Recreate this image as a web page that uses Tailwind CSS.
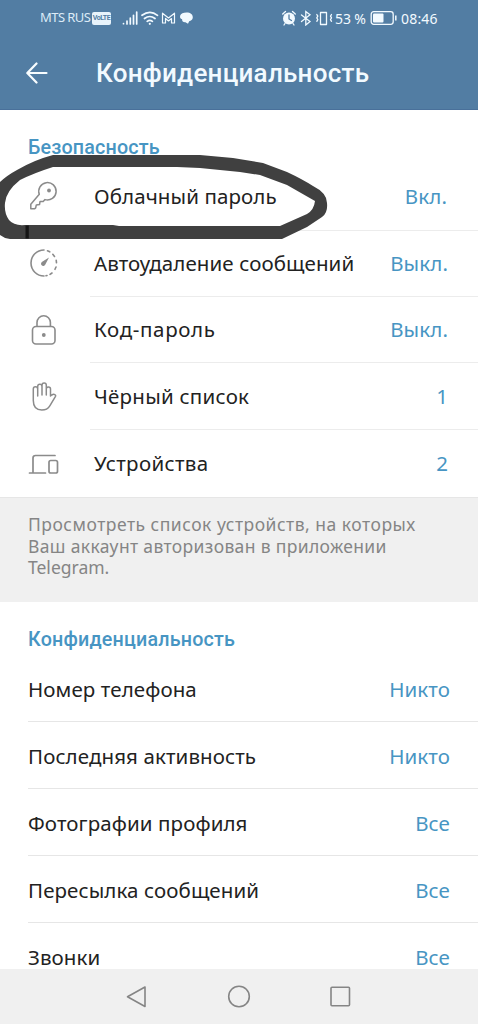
<!DOCTYPE html>
<html lang="ru">
<head>
<meta charset="utf-8">
<title>Конфиденциальность</title>
<script src="https://cdn.jsdelivr.net/npm/@tailwindcss/browser@4"></script>
</head>
<body class="bg-white">
<div class="relative flex flex-col w-[478px] h-[1024px] overflow-hidden bg-white font-['Noto_Sans',sans-serif] text-[20.5px] tracking-[0.1px] text-[#222222] whitespace-nowrap">
  <header class="shrink-0 h-[110px] bg-[#527da3] border-b border-[#49709a] text-[#f2faff]">
    <div class="flex items-center h-9 pl-10 pr-[39px]">
      <span class="text-[13px] w-[50px] tracking-[-0.55px] text-[#dcebf7]">MTS RUS</span>
      <span class="ml-[2px] w-[19px] h-[13px] rounded-[2px] bg-[#e8f3fb] text-[#527da3] text-[7px] leading-[13px] font-bold text-center tracking-[-0.4px] font-['Roboto',sans-serif]">VoLTE</span>
      <svg class="ml-[11px]" width="73" height="16" viewBox="0 0 73 16" fill="none" stroke="#f2faff" stroke-width="1.7" stroke-linecap="round">
        <path d="M1.5 13.5v.2M5 11v3M8.300 8v6M11.500 5.300v8.700M14.700 2v12"/>
        <path d="M20 5.300q8-6 15.500 0M22.500 8.500q5.300-4 10.500 0M25.200 11.300q2.600-2 5.200 0"/>
        <circle cx="27.800" cy="13.800" r="1.100" fill="#f2faff" stroke="none"/>
        <path d="M40.500 13V3.200L46.500 8l6-4.800V13h-3V8.500l-3 2.500-3-2.500V13z" stroke-width="1.200" stroke-linejoin="round"/>
        <path d="M64.500 2.500c4 0 6.500 2 6.300 5-.1 2.200-1.800 3.300-3.600 3.700l-1.200 2.500-2.500-1.500c-2.300.2-3.600-.9-3.400-2.900-1.800-.3-2.400-1.800-1.900-3.800.7-2 3-3 6.300-3z" fill="#f2faff" stroke="none"/>
      </svg>
      <svg class="ml-auto" width="52" height="16" viewBox="0 0 52 16" fill="none" stroke="#f2faff" stroke-width="1.300" stroke-linecap="round">
        <circle cx="7" cy="8.500" r="6" fill="#f2faff" stroke="none"/>
        <path d="M.7 4l2.800-2.500M10.500 1.500L13.300 4M3 13.500L2 15M11 13.500l1 1.500"/>
        <path d="M7 5v4l2.500 1.500" stroke="#527da3"/>
        <path d="M19.500 5l8.500 6.500L23.800 15V1.500l4.200 3.300L19.500 11.500"/>
        <path d="M38.500 2.500h6v12h-6zM34.800 4.500l1 1.700-1 1.700 1 1.700-1 1.700M49.500 4.500l-1 1.700 1 1.700-1 1.700 1 1.700" stroke-linejoin="round"/>
      </svg>
      <span class="ml-[1px] w-[34px] text-[14px] tracking-[-0.1px]">53 %</span>
      <svg class="ml-[1px]" width="28" height="16" viewBox="0 0 28 16"><rect x="1.200" y="1.700" width="22" height="12.600" rx="2.500" fill="none" stroke="#f2faff" stroke-width="1.300"/><rect x="3" y="3.500" width="10.500" height="9" rx="1" fill="#f2faff"/><path d="M25.800 5.500v5" stroke="#f2faff" stroke-width="1.500"/></svg>
      <span class="ml-[3px] w-[38px] text-[14px] tracking-[0.2px]">08:46</span>
    </div>
    <div class="flex items-center h-[74px] pl-[26px]">
      <svg width="22" height="22" viewBox="0 0 22 22" fill="none" stroke="#f8fdff" stroke-width="2.200" stroke-linecap="round" stroke-linejoin="round"><path d="M20.500 11H1.500M10.500 1.500L1.300 11l9.200 9.500"/></svg>
      <h1 class="ml-[48px] text-[26px] tracking-[0.25px] font-medium font-['Roboto',sans-serif]">Конфиденциальность</h1>
    </div>
  </header>
  <h2 class="shrink-0 h-[53px] pt-6 pl-7 text-[19.7px] leading-7 tracking-[0.18px] font-medium text-[#4795c3] font-['Roboto',sans-serif]">Безопасность</h2>
  <section class="shrink-0 flex flex-col h-[334px]">
    <div class="flex-1 flex items-center">
      <svg class="ml-7 mr-9 shrink-0" width="30" height="30" viewBox="0 0 30 30" fill="none" stroke="#8b8b8b" stroke-width="1.500" stroke-linejoin="round" stroke-linecap="round"><path d="M11.300 13.300A8.700 8.700 0 1 1 17 18.600l-1.800 2h-3.200l-.5 3-3.200.3-.6 2.900-1.200 1H2.800v-4.500z"/><circle cx="21" cy="9.500" r="1.900" fill="#8b8b8b" stroke="none"/></svg>
      <span>Облачный пароль</span><span class="ml-auto pr-[31px] text-[#4795c3]">Вкл.</span>
    </div>
    <div class="flex-1 flex items-center">
      <svg class="ml-7 mr-8 shrink-0" width="30" height="30" viewBox="0 0 30 30" fill="none" stroke="#8b8b8b" stroke-width="1.600" stroke-linecap="round"><path d="M16 2a13 13 0 1 0 0 26"/><path d="M19.500 2.800l2.200 1M24.800 6.300l1.700 2.200M28.200 12.200l.3 2.600M28 19l-1 2.300M24 25l-2 1.400M19 27.500l-1 .3"/><path d="M21 9.500l-6.800 4.300a2.200 2.200 0 1 0 3 2.900z" fill="#8b8b8b" stroke="none"/></svg>
      <div class="flex-1 self-stretch flex items-center border-y border-[#ececec] pl-1"><span>Автоудаление сообщений</span><span class="ml-auto pr-[30px] text-[#4795c3]">Выкл.</span></div>
    </div>
    <div class="flex-1 flex items-center">
      <svg class="ml-7 mr-8 shrink-0" width="30" height="30" viewBox="0 0 30 30" fill="none" stroke="#8b8b8b" stroke-width="1.600"><rect x="4.500" y="11.500" width="22.500" height="17.500" rx="3.500"/><path d="M9 11.500V7.500a6.700 6.700 0 0 1 13.400 0v4"/><circle cx="15.800" cy="20" r="1.900" fill="#8b8b8b" stroke="none"/></svg>
      <div class="flex-1 self-stretch flex items-center border-b border-[#ececec] pl-1"><span class="tracking-[0.65px]">Код-пароль</span><span class="ml-auto pr-[30px] text-[#4795c3]">Выкл.</span></div>
    </div>
    <div class="flex-1 flex items-center">
      <svg class="ml-7 mr-8 shrink-0" width="30" height="30" viewBox="0 0 30 30" fill="none" stroke="#8b8b8b" stroke-width="1.500" stroke-linecap="round" stroke-linejoin="round"><path d="M9.700 14V7a2.200 2.200 0 0 0-4.400 0v11.500c0 6 3.200 9.500 8.500 9.500 3.500 0 6.200-1.200 8-4.200l5.700-9.500c.7-1.400-1.400-2.800-3.700-1.300L22.500 14V7a2.100 2.100 0 0 0-4.200 0M9.700 13V4.500a2.100 2.100 0 0 1 4.300 0V13M14 13V3.200a2.100 2.100 0 0 1 4.300 0V13"/></svg>
      <div class="flex-1 self-stretch flex items-center border-b border-[#ececec] pl-1"><span class="tracking-[0.25px]">Чёрный список</span><span class="ml-auto pr-[30px] text-[#4795c3]">1</span></div>
    </div>
    <div class="flex-1 flex items-center">
      <svg class="ml-7 mr-9 shrink-0" width="32" height="30" viewBox="0 0 32 30" fill="none" stroke="#8b8b8b" stroke-width="1.700" stroke-linecap="round"><path d="M1.500 24h16M5 24V9q0-2.500 2.500-2.500H27"/><rect x="21" y="11.500" width="8.500" height="12.500" rx="1.800"/></svg>
      <span class="-ml-0.5 tracking-[0.35px]">Устройства</span><span class="ml-auto pr-[30px] text-[#4795c3]">2</span>
    </div>
  </section>
  <p class="shrink-0 h-[105px] border-t border-[#e6e6e6] bg-[#f0f0f0] pt-4 pl-7 text-[17.500px] leading-[21.700px] tracking-[0.5px] text-[#858585]">Просмотреть список устройств, на которых<br><span class="tracking-[0.35px]">Ваш аккаунт авторизован в приложении</span><br><span class="tracking-[0px]">Telegram.</span></p>
  <h2 class="shrink-0 h-[54px] pt-6 pl-7 text-[19.700px] leading-7 tracking-[0.2px] font-medium text-[#4795c3] font-['Roboto',sans-serif]">Конфиденциальность</h2>
  <section class="h-[313px] overflow-hidden">
    <div class="flex flex-col h-[333px] pl-7">
      <div class="h-[66px] flex items-center justify-between border-b border-[#e6e6e6] pr-7 pt-0.5"><span>Номер телефона</span><span class="text-[#4795c3]">Никто</span></div>
      <div class="flex-1 flex items-center justify-between border-b border-[#e6e6e6] pr-7 pt-0.5"><span>Последняя активность</span><span class="text-[#4795c3]">Никто</span></div>
      <div class="flex-1 flex items-center justify-between border-b border-[#e6e6e6] pr-7 pt-0.5"><span>Фотографии профиля</span><span class="text-[#4795c3]">Все</span></div>
      <div class="flex-1 flex items-center justify-between border-b border-[#e6e6e6] pr-7 pt-0.5"><span>Пересылка сообщений</span><span class="text-[#4795c3]">Все</span></div>
      <div class="flex-1 flex items-center justify-between pr-7 pt-0.5 leading-5"><span>Звонки</span><span class="text-[#4795c3]">Все</span></div>
    </div>
  </section>
  <nav class="shrink-0 flex items-center justify-center gap-[78px] h-[55px] bg-[#f0f0f0]">
    <svg width="24" height="24" viewBox="0 0 24 24" fill="none" stroke="#858585" stroke-width="1.600" stroke-linejoin="round"><path d="M20 2v19.500L2.500 11.800z"/></svg>
    <svg width="24" height="24" viewBox="0 0 24 24" fill="none" stroke="#858585" stroke-width="1.600"><circle cx="12" cy="11.500" r="10.300"/></svg>
    <svg width="24" height="24" viewBox="0 0 24 24" fill="none" stroke="#858585" stroke-width="1.600"><rect x="2" y="2.300" width="18.500" height="18.500" rx="1"/></svg>
  </nav>
  <svg class="absolute left-0 top-0 pointer-events-none" width="478" height="260" viewBox="0 0 478 260">
    <path fill="#404040" fill-rule="evenodd" d="M-1 183Q6 176 17 170Q34 160 53 155H200L233 158L263 163L287 172Q302 179 313 186Q327 193 327 203Q328 213 322 217L307 227L282 239H10Q3 238 -1 234ZM53 167H177L200 168L240 172L260 175L287 185L315 201Q314 210 307 214L280 226H119L113 225H25Q14 226 9 220Q4 213 5 203Q6 191 20 180Q34 173 53 167Z"/>
    <path fill="#151515" d="M25.500 225.500h3.300v13h-3.300z"/>
  </svg>
</div>
</body>
</html>
